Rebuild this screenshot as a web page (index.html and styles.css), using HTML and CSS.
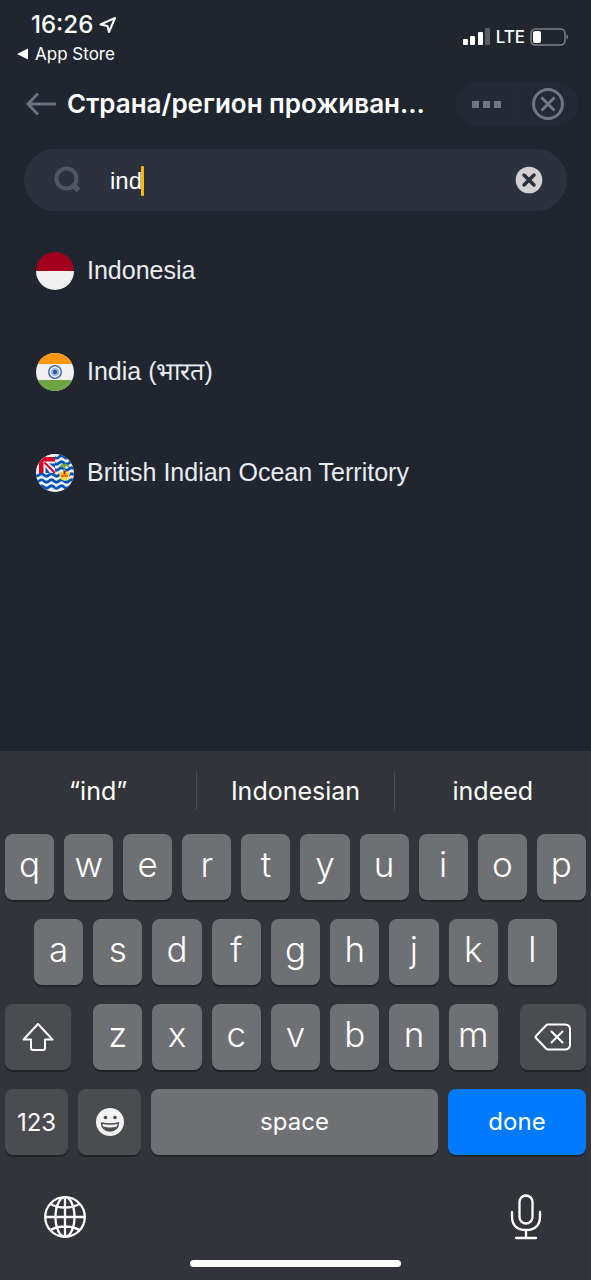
FILE: index.html
```
<!DOCTYPE html>
<html lang="ru">
<head>
    <meta charset="UTF-8">
    <meta name="viewport" content="width=device-width, initial-scale=1.0">
    <title>Страна/регион проживания</title>
    <link rel="stylesheet" href="styles.css">
</head>
<body>
    <main class="app">
        <!-- Status Bar -->
        <div class="status-bar">
            <div class="status-left">
                <div class="clock">
                    <span>16:26</span>
                    <svg width="18" height="18" viewBox="0 0 18 18" fill="none" stroke="currentColor" stroke-width="2" stroke-linejoin="round">
                        <path d="M16 2 1.500 8.500l7 1.500L10 16z"/>
                    </svg>
                </div>
                <a href="#" class="back-to-app">
                    <svg width="12" height="12" viewBox="0 0 12 12" fill="currentColor"><path d="M0 6 11 .5v11z"/></svg>
                    <span>App Store</span>
                </a>
            </div>
            <div class="status-right">
                <svg width="28" height="18" viewBox="0 0 28 18" fill="currentColor">
                    <rect x="0" y="11" width="5" height="6" rx="1"/>
                    <rect x="7" y="8" width="5" height="9" rx="1"/>
                    <rect x="15" y="4" width="5" height="13" rx="1"/>
                    <rect x="22" y="0" width="5" height="17" rx="1" opacity="0.25"/>
                </svg>
                <span class="network">LTE</span>
                <svg width="39" height="18" viewBox="0 0 39 18" fill="none">
                    <rect x="1" y="1" width="34" height="16" rx="4.500" stroke="#7d8188" stroke-width="1.500"/>
                    <rect x="3" y="3" width="8" height="12" rx="2" fill="#fff"/>
                    <path d="M36.500 6.500c2 .5 2 4.500 0 5z" fill="#7d8188"/>
                </svg>
            </div>
        </div>

        <!-- Header -->
        <header class="header">
            <button class="icon-button" aria-label="Назад">
                <svg width="30" height="24" viewBox="0 0 30 24" fill="none" stroke="#6b7180" stroke-width="3">
                    <path d="M12 1.500 2 12l10 10.500M2 12h28"/>
                </svg>
            </button>
            <h1 class="title">Страна/регион проживан...</h1>
            <div class="capsule">
                <button class="icon-button capsule-item" aria-label="Меню">
                    <svg width="30" height="8" viewBox="0 0 30 8" fill="#717684">
                        <rect x="0" y="1" width="7" height="7"/>
                        <rect x="11" y="1" width="7" height="7"/>
                        <rect x="22" y="1" width="7" height="7"/>
                    </svg>
                </button>
                <button class="icon-button capsule-item" aria-label="Закрыть">
                    <svg width="34" height="34" viewBox="0 0 34 34" fill="none" stroke="#717684" stroke-width="3">
                        <circle cx="17" cy="17" r="14.500"/>
                        <path d="m10.500 10.500 13 13m0-13-13 13"/>
                    </svg>
                </button>
            </div>
        </header>

        <!-- Search -->
        <div class="search">
            <svg width="28" height="28" viewBox="0 0 28 28" fill="none" stroke="#505763" stroke-width="4">
                <circle cx="12.500" cy="12.500" r="10"/>
                <path d="m18 18 6.500 6.500" stroke-width="5.500"/>
            </svg>
            <div class="search-field">
                <input type="text" class="search-input" aria-label="Поиск" value="ind">
                <span class="caret"></span>
            </div>
            <button class="icon-button" aria-label="Очистить">
                <svg width="28" height="28" viewBox="0 0 28 28">
                    <circle cx="14" cy="14" r="13.300" fill="#d2d2d2"/>
                    <path d="m9 9 10 10m0-10-10 10" stroke="#29303b" stroke-width="3.500" stroke-linecap="round"/>
                </svg>
            </button>
        </div>

        <!-- Countries -->
        <ul class="countries">
            <li class="country">
                <svg class="flag" viewBox="0 0 38 38">
                    <rect width="38" height="19" fill="#a2001d"/>
                    <rect y="19" width="38" height="19" fill="#f0f0f0"/>
                </svg>
                <span class="country-name">Indonesia</span>
            </li>
            <li class="country">
                <svg class="flag" viewBox="0 0 38 38">
                    <rect width="38" height="38" fill="#f0f0f0"/>
                    <rect width="38" height="11" fill="#ff9811"/>
                    <rect y="27" width="38" height="11" fill="#6da544"/>
                    <circle cx="19" cy="19" r="6.300" fill="#f0f0f0" stroke="#2a5ca8" stroke-width="1.300"/>
                    <circle cx="19" cy="19" r="4" fill="#9db7da"/>
                    <circle cx="19" cy="19" r="2.200" fill="#2a5ca8"/>
                </svg>
                <span class="country-name">India (भारत)</span>
            </li>
            <li class="country">
                <svg class="flag" viewBox="0 0 38 38">
                    <rect width="38" height="38" fill="#f0f0f0"/>
                    <g fill="none" stroke="#0052b4" stroke-width="2.600">
                        <path d="M-2 2q2.500 3.500 5 1t5 0 5 0 5 0 5 0 5 0 5 0 5 0"/>
                        <path d="M-2 8q2.500 3.500 5 1t5 0 5 0 5 0 5 0 5 0 5 0 5 0"/>
                        <path d="M-2 14q2.500 3.500 5 1t5 0 5 0 5 0 5 0 5 0 5 0 5 0"/>
                        <path d="M-2 20q2.500 3.500 5 1t5 0 5 0 5 0 5 0 5 0 5 0 5 0"/>
                        <path d="M-2 26q2.500 3.500 5 1t5 0 5 0 5 0 5 0 5 0 5 0 5 0"/>
                        <path d="M-2 32q2.500 3.500 5 1t5 0 5 0 5 0 5 0 5 0 5 0 5 0"/>
                    </g>
                    <rect width="19" height="19" fill="#f0f0f0"/>
                    <path d="M9.500 13v6H14zM13 9.500h6V14z" fill="#0052b4"/>
                    <path d="M0 3h19v4.500H7.500V19H3V7.500H0z" fill="#d80027"/>
                    <path d="m8.500 8.500 10.500 10.500" stroke="#d80027" stroke-width="2"/>
                    <path d="M24 13q4.500-5 9 0M28.500 11v8" fill="none" stroke="#6da544" stroke-width="2"/>
                    <path d="M23 19q5.500-3 11 0l-1.500 6-4 2-4-2z" fill="#ffda44"/>
                    <path d="M25 20.500h7v2.500h-7z" fill="#f26a1b"/>
                    <path d="M27.500 17h2v3h-2z" fill="#d80027"/>
                </svg>
                <span class="country-name">British Indian Ocean Territory</span>
            </li>
        </ul>
    </main>

    <!-- Keyboard -->
    <section class="keyboard" aria-label="Keyboard">
        <div class="suggestions">
            <button class="suggestion">“ind”</button>
            <button class="suggestion">Indonesian</button>
            <button class="suggestion">indeed</button>
        </div>

        <div class="keys">
            <div class="key-row">
                <button class="key">q</button>
                <button class="key">w</button>
                <button class="key">e</button>
                <button class="key">r</button>
                <button class="key">t</button>
                <button class="key">y</button>
                <button class="key">u</button>
                <button class="key">i</button>
                <button class="key">o</button>
                <button class="key">p</button>
            </div>
            <div class="key-row key-row-inset">
                <button class="key">a</button>
                <button class="key">s</button>
                <button class="key">d</button>
                <button class="key">f</button>
                <button class="key">g</button>
                <button class="key">h</button>
                <button class="key">j</button>
                <button class="key">k</button>
                <button class="key">l</button>
            </div>
            <div class="key-row key-row-wide">
                <button class="key key-dark key-shift" aria-label="Shift">
                    <svg width="32" height="30" viewBox="0 0 32 30" fill="none" stroke="currentColor" stroke-width="2" stroke-linejoin="round">
                        <path d="M16 2 1.500 17.500H9V26q0 2 2 2h10q2 0 2-2v-8.500h7.500z"/>
                    </svg>
                </button>
                <div class="key-group">
                    <button class="key">z</button>
                    <button class="key">x</button>
                    <button class="key">c</button>
                    <button class="key">v</button>
                    <button class="key">b</button>
                    <button class="key">n</button>
                    <button class="key">m</button>
                </div>
                <button class="key key-dark key-shift" aria-label="Delete">
                    <svg width="38" height="28" viewBox="0 0 38 28" fill="none" stroke="currentColor" stroke-width="2" stroke-linejoin="round" stroke-linecap="round">
                        <path d="M14 1.500h17q5 0 5 5v15q0 5-5 5H14q-1 0-2-1L2 15q-1-1 0-2L12 2.500q1-1 2-1z"/>
                        <path d="m17.500 8.500 11 11m0-11-11 11"/>
                    </svg>
                </button>
            </div>
            <div class="key-row">
                <button class="key key-dark key-label key-small">123</button>
                <button class="key key-dark key-label key-small" aria-label="Emoji">
                    <svg width="28" height="28" viewBox="0 0 28 28">
                        <circle cx="14" cy="14" r="14" fill="#f2f2f2"/>
                        <circle cx="9.500" cy="9.500" r="1.800" fill="#4b4c50"/>
                        <circle cx="19" cy="9.500" r="1.800" fill="#4b4c50"/>
                        <path d="M5.500 15q8.500 2 17 0-.5 8-8.500 8t-8.500-8z" fill="#f2f2f2" stroke="#4b4c50" stroke-width="1.400" stroke-linejoin="round"/>
                        <path d="M7 18.500q7 2 14 0-2 4.500-7 4.500t-7-4.500z" fill="#4b4c50"/>
                    </svg>
                </button>
                <button class="key key-label">space</button>
                <button class="key key-label key-done">done</button>
            </div>
        </div>

        <div class="keyboard-footer">
            <button class="icon-button" aria-label="Next keyboard">
                <svg width="42" height="42" viewBox="0 0 42 42" fill="none" stroke="currentColor" stroke-width="2.300">
                    <circle cx="21" cy="21" r="19.800"/>
                    <ellipse cx="21" cy="21" rx="9.500" ry="19.800"/>
                    <path d="M21 1v40M1 21h40M6.500 8q6 3.500 14.500 3.500T35.500 8M6.500 34q6-3.500 14.500-3.500T35.500 34"/>
                </svg>
            </button>
            <button class="icon-button" aria-label="Dictation">
                <svg width="32" height="46" viewBox="0 0 32 46" fill="none" stroke="currentColor" stroke-width="2.300" stroke-linecap="round">
                    <rect x="9.500" y="1.500" width="13" height="28" rx="6.500"/>
                    <path d="M2 18v4q0 14 14 14t14-14v-4M16 36v8M6 44h20"/>
                </svg>
            </button>
        </div>
        <div class="home-indicator"></div>
    </section>
</body>
</html>
```
FILE: styles.css
```
* {
    margin: 0;
    padding: 0;
    box-sizing: border-box;
}

body {
    display: flex;
    flex-direction: column;
    min-height: 100vh;
    background-color: #20262f;
    color: #fff;
    font-family: Inter, sans-serif;
}

button {
    border: none;
    background: none;
    color: inherit;
    font-family: inherit;
    cursor: pointer;
}

svg {
    display: block;
    flex-shrink: 0;
}

.app {
    flex: 1;
}

/* Status bar */
.status-bar {
    display: flex;
    justify-content: space-between;
    align-items: flex-start;
    padding: 10px 22px 0 17px;
}

.clock {
    display: flex;
    align-items: center;
    gap: 6px;
    padding-left: 14px;
    font-size: 24px;
    font-weight: 500;
    line-height: 30px;
}

.back-to-app {
    display: flex;
    align-items: center;
    gap: 6px;
    color: #fff;
    font-size: 17px;
    line-height: 28px;
    text-decoration: none;
}

.status-right {
    display: flex;
    align-items: center;
    gap: 5px;
    padding-top: 17px;
}

.network {
    font-size: 17px;
    font-weight: 500;
    line-height: 20px;
}

/* Header */
.header {
    display: flex;
    align-items: center;
    padding: 14px 13px 0 26px;
}

.title {
    flex: 1;
    padding-left: 11px;
    font-size: 26px;
    font-weight: 600;
    line-height: 30px;
    white-space: nowrap;
}

.capsule {
    display: flex;
    align-items: center;
    height: 44px;
    border-radius: 22px;
    background-color: #232a36;
}

.capsule-item {
    display: flex;
    justify-content: center;
    width: 61px;
}

.capsule-item + .capsule-item {
    border-left: 1px solid #262d39;
}

/* Search */
.search {
    display: flex;
    align-items: center;
    height: 62px;
    margin: 23px 24px 0;
    padding: 0 24px 0 30px;
    border-radius: 31px;
    background-color: #2b323e;
}

.search-field {
    position: relative;
    flex: 1;
    padding: 2px 0 0 28px;
}

.search-input {
    width: 100%;
    border: none;
    outline: none;
    background: none;
    color: #fff;
    font-family: "Liberation Sans", Arial, sans-serif;
    font-size: 24px;
    line-height: 30px;
}

.caret {
    position: absolute;
    top: 2px;
    left: 59px;
    width: 3px;
    height: 30px;
    border-radius: 1px;
    background-color: #f0b90b;
}

/* Countries */
.countries {
    padding: 9px 36px;
    list-style: none;
}

.country {
    display: flex;
    align-items: center;
    gap: 13px;
    height: 101px;
    color: #eaecef;
    font-family: "Liberation Sans", Arial, sans-serif;
    font-size: 25px;
    line-height: 30px;
}

.country-name {
    padding-bottom: 2px;
}

.flag {
    width: 38px;
    height: 38px;
    border-radius: 50%;
}

/* Keyboard */
.keyboard {
    background-color: #323439;
}

.suggestions {
    display: flex;
    padding: 20px 0 24px;
}

.suggestion {
    flex: 1 1 0;
    padding-top: 1px;
    font-size: 25px;
    line-height: 38px;
}

.suggestion + .suggestion {
    border-left: 1px solid #4b4d52;
}

.keys {
    display: flex;
    flex-direction: column;
    gap: 19px;
    padding: 0 5px;
}

.key-row,
.key-group {
    display: flex;
    gap: 10px;
}

.key-row-inset {
    padding: 0 29px;
}

.key-row-wide {
    gap: 22px;
}

.key-group {
    flex: 1;
}

.key {
    display: flex;
    flex: 1;
    justify-content: center;
    align-items: center;
    height: 66px;
    padding-bottom: 6px;
    border-radius: 8px;
    background-color: #6f7074;
    box-shadow: 0 2px 0 #222327;
    font-size: 35px;
    font-weight: 300;
}

.key-dark {
    background-color: #4b4c50;
}

.key-shift {
    flex: 0 0 66px;
    padding-bottom: 0;
}

.key-label {
    padding-bottom: 2px;
    font-size: 24px;
    font-weight: 400;
}

.key-small {
    flex: 0 0 63px;
    padding-bottom: 0;
}

.key-done {
    flex: 0 0 138px;
    background-color: #007aff;
}

.keyboard-footer {
    display: flex;
    justify-content: space-between;
    align-items: center;
    padding: 39px 49px 0 44px;
}

.home-indicator {
    width: 211px;
    height: 7px;
    margin: 0 auto;
    border-radius: 4px;
    background-color: #fff;
}

.keyboard-footer + .home-indicator {
    margin: 20px auto 13px;
}
```
